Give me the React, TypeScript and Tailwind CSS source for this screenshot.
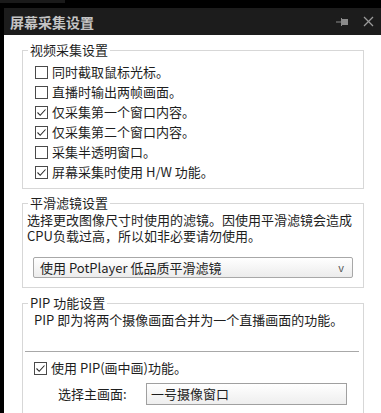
function Box({ checked }: { checked?: boolean }) {
  return (
    <span className="w-[13px] h-[13px] border border-[#4a4a4a] bg-white flex items-center justify-center shrink-0">
      {checked && (
        <svg width="11" height="11" viewBox="0 0 11 11">
          <polyline points="1.5,5.5 4.2,8.3 9.5,2.5" fill="none" stroke="#2a2a2a" strokeWidth="1.1" />
        </svg>
      )}
    </span>
  )
}

function Row({ label, checked }: { label: string; checked?: boolean }) {
  return (
    <div className="h-[20px] flex items-center gap-[4px]">
      <Box checked={checked} />
      <span>{label}</span>
    </div>
  )
}

const captureOptions = [
  { label: "同时截取鼠标光标。", checked: false },
  { label: "直播时输出两帧画面。", checked: false },
  { label: "仅采集第一个窗口内容。", checked: true },
  { label: "仅采集第二个窗口内容。", checked: true },
  { label: "采集半透明窗口。", checked: false },
  { label: "屏幕采集时使用 H/W 功能。", checked: true },
]

export default function App() {
  return (
    <div
      className="w-[381px] h-[413px] bg-black overflow-hidden flex flex-col text-[13px] text-[#1e1e1e]"
      style={{ fontFamily: '"Noto Sans CJK SC", "Noto Sans", sans-serif' }}
    >
      <div className="h-[8px] shrink-0">
        <div className="w-[65px] h-[3px] bg-[#1a1a1a]" />
      </div>

      {/* title bar */}
      <div className="ml-1 h-[27px] shrink-0 bg-[#1c1c1c] flex items-center pl-[6px] pr-[7px]">
        <span className="text-[14px] font-bold text-[#c4c4c4] leading-none">屏幕采集设置</span>
        <div className="ml-auto flex items-center gap-[14px]">
          <svg width="13" height="10" viewBox="0 0 13 10">
            <line x1="0" y1="5" x2="5" y2="5" stroke="#8a8a8a" strokeWidth="1" />
            <line x1="5.5" y1="1" x2="5.5" y2="9" stroke="#8a8a8a" strokeWidth="1" />
            <rect x="6" y="2" width="6" height="6" fill="#8a8a8a" />
          </svg>
          <svg width="11" height="11" viewBox="0 0 11 11">
            <line x1="1" y1="1" x2="10" y2="10" stroke="#9a9a9a" strokeWidth="1.2" />
            <line x1="10" y1="1" x2="1" y2="10" stroke="#9a9a9a" strokeWidth="1.2" />
          </svg>
        </div>
      </div>

      {/* body */}
      <div className="ml-1 flex-1 bg-white pt-[7px] pl-[18px] pr-[17px]">
        <fieldset className="border border-[#d7d7d7] pl-[12px] pt-[4px] pb-[6px]">
          <legend className="ml-[-7px] px-[2px] leading-[16px]">视频采集设置</legend>
          {captureOptions.map((o) => (
            <Row key={o.label} label={o.label} checked={o.checked} />
          ))}
        </fieldset>

        <fieldset className="mt-[6px] border border-[#d7d7d7] pl-[4px] pt-[1px] pb-[9px]">
          <legend className="ml-[1px] px-[2px] leading-[16px]">平滑滤镜设置</legend>
          <p className="leading-[16px]">
            选择更改图像尺寸时使用的滤镜。因使用平滑滤镜会造成
            <br />
            CPU负载过高，所以如非必要请勿使用。
          </p>
          <div className="mt-[13px] ml-[6px] w-[320px] h-[21px] border border-[#a8a8a8] rounded-[2px] bg-gradient-to-b from-white to-[#ececec] flex items-center pl-[6px] pr-[8px]">
            <span>使用 PotPlayer 低品质平滑滤镜</span>
            <span className="ml-auto text-[11px] text-[#555]">v</span>
          </div>
        </fieldset>

        <fieldset className="mt-[7px] border border-[#d7d7d7] pt-[1px] pb-[20px]">
          <legend className="ml-[5px] px-[2px] leading-[16px]">PIP 功能设置</legend>
          <p className="pl-[11px] leading-[15px]">PIP 即为将两个摄像画面合并为一个直播画面的功能。</p>
          <div className="mt-[24px] ml-[2px] mr-[4px] h-px bg-[#a8a8a8]" />
          <div className="mt-[6px] pl-[11px]">
            <Row label="使用 PIP(画中画)功能。" checked />
          </div>
          <div className="mt-[5px] pl-[35px] flex items-center">
            <span className="w-[88px]">选择主画面:</span>
            <div className="w-[201px] h-[22px] border border-[#a0a0a0] bg-gradient-to-b from-white to-[#eeeeee] flex items-center pl-[4px]">
              一号摄像窗口
            </div>
          </div>
        </fieldset>
      </div>
    </div>
  )
}
